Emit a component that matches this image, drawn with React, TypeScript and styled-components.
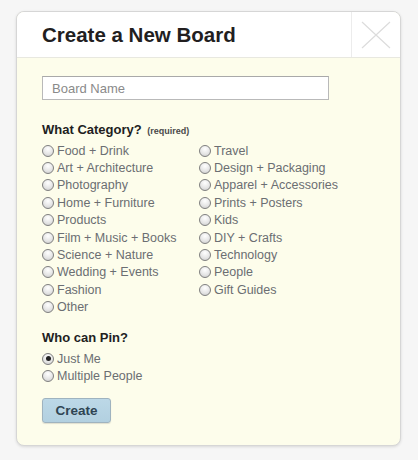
import styled, { createGlobalStyle } from 'styled-components';

const GlobalStyle = createGlobalStyle`
  html, body {
    margin: 0;
    padding: 0;
    background: #f6f6f6;
    font-family: "Liberation Sans", Arial, Helvetica, sans-serif;
  }
`;

const leftCategories = [
  'Food + Drink',
  'Art + Architecture',
  'Photography',
  'Home + Furniture',
  'Products',
  'Film + Music + Books',
  'Science + Nature',
  'Wedding + Events',
  'Fashion',
  'Other',
];

const rightCategories = [
  'Travel',
  'Design + Packaging',
  'Apparel + Accessories',
  'Prints + Posters',
  'Kids',
  'DIY + Crafts',
  'Technology',
  'People',
  'Gift Guides',
];

const Radio = ({ label, checked = false }: { label: string; checked?: boolean }) => (
  <Option>
    <RadioCircle $checked={checked} />
    <OptionLabel>{label}</OptionLabel>
  </Option>
);

const App = () => {
  return (
    <>
      <GlobalStyle />
      <Page>
        <Modal>
          <Header>
            <Title>Create a New Board</Title>
            <CloseBox aria-label="Close">
              <svg width="30" height="28" viewBox="0 0 30 28">
                <path d="M1 1 L29 27 M29 1 L1 27" stroke="#dcdcdc" strokeWidth="1.2" fill="none" />
              </svg>
            </CloseBox>
          </Header>
          <Body>
            <NameInput placeholder="Board Name" />
            <SectionTitle $top={21} $bottom={2}>
              What Category? <Required>(required)</Required>
            </SectionTitle>
            <Columns>
              <Column>
                {leftCategories.map((c) => (
                  <Radio key={c} label={c} />
                ))}
              </Column>
              <Column>
                {rightCategories.map((c) => (
                  <Radio key={c} label={c} />
                ))}
              </Column>
            </Columns>
            <SectionTitle $top={13} $bottom={3}>
              Who can Pin?
            </SectionTitle>
            <Column>
              <Radio label="Just Me" checked />
              <Radio label="Multiple People" />
            </Column>
            <CreateButton>Create</CreateButton>
          </Body>
        </Modal>
      </Page>
    </>
  );
};

export default App;

const Page = styled.div`
  width: 418px;
  height: 460px;
  padding: 11px 0 0 16px;
  box-sizing: border-box;
  overflow: hidden;
`;

const Modal = styled.div`
  width: 385px;
  height: 435px;
  box-sizing: border-box;
  border: 1px solid #d6d6d6;
  border-radius: 8px;
  overflow: hidden;
  background: #fdfdeb;
  box-shadow: 0 1px 3px rgba(0, 0, 0, 0.12);
  display: flex;
  flex-direction: column;
`;

const Header = styled.div`
  height: 45px;
  flex-shrink: 0;
  background: #ffffff;
  border-bottom: 1px solid #e8e8e0;
  display: flex;
  align-items: stretch;
`;

const Title = styled.h1`
  flex: 1;
  margin: 0;
  padding-left: 25px;
  display: flex;
  align-items: center;
  font-size: 20.5px;
  font-weight: bold;
  color: #221e1f;
`;

const CloseBox = styled.div`
  width: 48px;
  border-left: 1px solid #ececec;
  display: flex;
  align-items: center;
  justify-content: center;
`;

const Body = styled.div`
  padding: 18px 25px 0;
  display: flex;
  flex-direction: column;
  align-items: flex-start;
`;

const NameInput = styled.input`
  width: 287px;
  height: 24px;
  box-sizing: border-box;
  border: 1px solid #b9b9b9;
  border-top-color: #a9a9a9;
  background: #fff;
  padding: 0 9px;
  font-family: "Liberation Sans", Arial, sans-serif;
  font-size: 13px;
  color: #333;
  outline: none;

  &::placeholder {
    color: #8a8a8a;
  }
`;

const SectionTitle = styled.div<{ $top: number; $bottom: number }>`
  margin-top: ${(p) => p.$top}px;
  margin-bottom: ${(p) => p.$bottom}px;
  font-size: 13px;
  font-weight: bold;
  color: #221e1f;
  line-height: 18px;
`;

const Required = styled.span`
  font-size: 9px;
  color: #4a4a4a;
  margin-left: 2px;
`;

const Columns = styled.div`
  display: grid;
  grid-template-columns: 157px 1fr;
`;

const Column = styled.div`
  display: flex;
  flex-direction: column;
`;

const Option = styled.label`
  height: 17.4px;
  display: flex;
  align-items: center;
  gap: 3px;
`;

const RadioCircle = styled.span<{ $checked: boolean }>`
  width: 12px;
  height: 12px;
  box-sizing: border-box;
  border-radius: 50%;
  border: 1px solid #7f7f7f;
  background: radial-gradient(circle at 50% 30%, #ffffff 0%, #e6e6e6 55%, #c9c9c9 100%);
  display: flex;
  align-items: center;
  justify-content: center;

  &::after {
    content: '';
    display: ${(p) => (p.$checked ? 'block' : 'none')};
    width: 5px;
    height: 5px;
    border-radius: 50%;
    background: #222;
  }
`;

const OptionLabel = styled.span`
  font-size: 12.5px;
  color: #6b6e72;
`;

const CreateButton = styled.button`
  margin-top: 13px;
  width: 69px;
  height: 25px;
  border: 1px solid #9fb3bf;
  border-radius: 3px;
  background: linear-gradient(#bcd8e7, #b2d0e0);
  box-shadow: 0 1px 1px rgba(0, 0, 0, 0.12);
  font-family: "Liberation Sans", Arial, sans-serif;
  font-size: 13.5px;
  font-weight: bold;
  color: #2f4553;
  padding: 0;
`;
